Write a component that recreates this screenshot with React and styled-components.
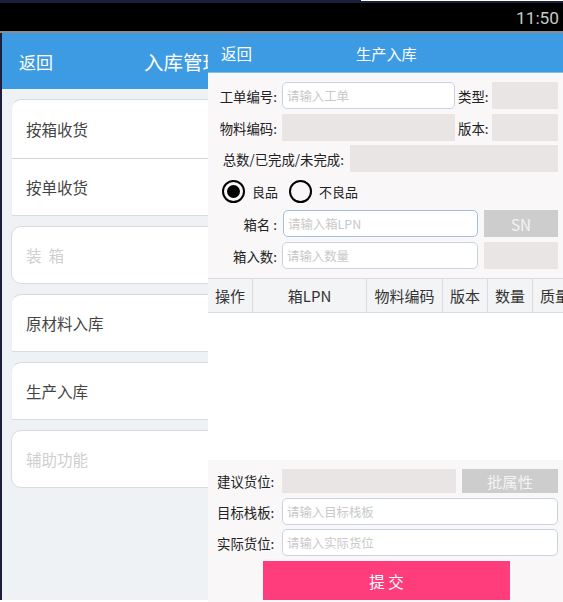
import React from 'react'
import styled, { createGlobalStyle } from 'styled-components'

const GlobalStyle = createGlobalStyle`
  html, body {
    margin: 0;
    padding: 0;
    background: #ffffff;
  }
  * {
    box-sizing: border-box;
  }
  body {
    font-family: "Noto Sans CJK SC", "Liberation Sans", sans-serif;
  }
`

const menu = [
  { items: ['按箱收货', '按单收货'], sharp: true },
  { items: ['装  箱'], disabled: true },
  { items: ['原材料入库'], sharp: true },
  { items: ['生产入库'], sharp: true },
  { items: ['辅助功能'], disabled: true },
]

const columns = [
  { title: '操作', width: 45 },
  { title: '箱LPN', width: 114 },
  { title: '物料编码', width: 76 },
  { title: '版本', width: 45 },
  { title: '数量', width: 45 },
  { title: '质量', width: 45 },
]

function App() {
  return (
    <Page>
      <GlobalStyle />
      <TopStrip>
        <TopStripLight />
      </TopStrip>
      <StatusBar>11:50</StatusBar>
      <Screens>
        <MenuScreen>
          <MenuInner>
            <MenuHeader>
              <MenuBack>返回</MenuBack>
              <MenuTitle>入库管理</MenuTitle>
            </MenuHeader>
            <MenuList>
              {menu.map((card) => (
                <MenuCard key={card.items[0]} $sharp={card.sharp}>
                  {card.items.map((item) => (
                    <MenuItem key={item} $disabled={card.disabled}>
                      {item}
                    </MenuItem>
                  ))}
                </MenuCard>
              ))}
            </MenuList>
          </MenuInner>
        </MenuScreen>

        <FormScreen>
          <FormHeader>
            <FormBack>返回</FormBack>
            <FormTitle>生产入库</FormTitle>
          </FormHeader>

          <TopForm>
            <Row>
              <Label $width={74}>工单编号:</Label>
              <TextInput $width={173} placeholder="请输入工单" />
              <SideLabel>类型:</SideLabel>
              <ReadOnly $width={66} />
            </Row>
            <Row>
              <Label $width={74}>物料编码:</Label>
              <ReadOnly $width={173} />
              <SideLabel>版本:</SideLabel>
              <ReadOnly $width={66} />
            </Row>
            <Row $top={-1}>
              <Label $width={141}>总数/已完成/未完成:</Label>
              <ReadOnly $width={208} $left={1} />
            </Row>
            <RadioRow>
              <RadioOption>
                <RadioMark $checked />
                <RadioText>良品</RadioText>
              </RadioOption>
              <RadioOption>
                <RadioMark />
                <RadioText>不良品</RadioText>
              </RadioOption>
            </RadioRow>
            <Row $top={2}>
              <Label $width={69} $tight>箱名 :</Label>
              <TextInput $width={195} $left={6} $focused placeholder="请输入箱LPN" />
              <GreyButton $width={74} $left={6}>SN</GreyButton>
            </Row>
            <Row>
              <Label $width={74}>箱入数:</Label>
              <TextInput $width={196} placeholder="请输入数量" />
              <ReadOnly $width={74} $left={6} />
            </Row>
          </TopForm>

          <Table>
            {columns.map((col) => (
              <HeadCell key={col.title} $width={col.width}>
                {col.title}
              </HeadCell>
            ))}
          </Table>
          <TableBody />

          <BottomForm>
            <Row $height={24}>
              <BottomLabel>建议货位:</BottomLabel>
              <ReadOnly $width={174} />
              <GreyButton $width={96} $left={6}>批属性</GreyButton>
            </Row>
            <Row $top={5}>
              <BottomLabel>目标栈板:</BottomLabel>
              <TextInput $width={276} placeholder="请输入目标栈板" />
            </Row>
            <Row $top={4}>
              <BottomLabel>实际货位:</BottomLabel>
              <TextInput $width={276} placeholder="请输入实际货位" />
            </Row>
            <SubmitButton>提 交</SubmitButton>
          </BottomForm>
        </FormScreen>
      </Screens>
    </Page>
  )
}

const Page = styled.div`
  width: 563px;
  height: 602px;
  overflow: hidden;
  display: flex;
  flex-direction: column;
  background: #ffffff;
`
const TopStrip = styled.div`
  height: 3px;
  flex: none;
  display: flex;
  justify-content: flex-end;
  background: #1b1f3b;
`
const TopStripLight = styled.div`
  width: 202px;
  height: 1px;
  background: #ffffff;
`
const StatusBar = styled.div`
  height: 30px;
  flex: none;
  background: #000000;
  border-bottom: 2px solid #8c8c8c;
  color: #c9c9c9;
  font-family: Roboto, "Liberation Sans", sans-serif;
  font-size: 17.3px;
  line-height: 30px;
  text-align: right;
  padding-right: 4px;
`
const Screens = styled.div`
  flex: 1;
  min-height: 0;
  display: flex;
`
const MenuScreen = styled.div`
  width: 208px;
  height: 567px;
  border-left: 2px solid #1b1f3b;
  flex: none;
  overflow: hidden;
  background: #eff2f5;
`
const MenuInner = styled.div`
  width: 400px;
`
const MenuHeader = styled.div`
  height: 56px;
  display: flex;
  align-items: center;
  padding-left: 17px;
  background: #3d9be3;
  color: #ffffff;
`
const MenuBack = styled.span`
  width: 125px;
  font-size: 17px;
`
const MenuTitle = styled.span`
  font-size: 19.5px;
  white-space: nowrap;
`
const MenuList = styled.div`
  display: flex;
  flex-direction: column;
  gap: 10px;
  padding: 10px 0 0 9px;
`
const MenuCard = styled.div`
  background: #ffffff;
  border: 1px solid #d8dade;
  border-radius: 10px;
  border-bottom-left-radius: ${(p) => (p.$sharp ? '0' : '10px')};
  border-left-color: ${(p) => (p.$sharp ? '#eceef0' : '#d8dade')};
`
const MenuItem = styled.div`
  height: 56px;
  display: flex;
  align-items: center;
  padding-left: 14px;
  font-size: 15.5px;
  white-space: pre;
  color: ${(p) => (p.$disabled ? '#cfcfcf' : '#444444')};
  &:not(:last-child) {
    height: 58px;
  }
  & + & {
    height: 57px;
    border-top: 1px solid #d2d3d6;
  }
`
const FormScreen = styled.div`
  flex: 1;
  min-width: 0;
  display: flex;
  flex-direction: column;
  background: #f9f7f8;
  overflow: hidden;
`
const FormHeader = styled.div`
  height: 40px;
  flex: none;
  display: flex;
  align-items: center;
  background: #3d9be3;
  border-bottom: 1px solid #7cc0ef;
  color: #ffffff;
  padding-left: 13px;
`
const FormBack = styled.span`
  width: 135px;
  font-size: 15.5px;
`
const FormTitle = styled.span`
  font-size: 15.2px;
`
const TopForm = styled.div`
  height: 205px;
  flex: none;
  padding-top: 9px;
  display: flex;
  flex-direction: column;
  gap: 5px;
`
const Row = styled.div`
  flex: none;
  height: ${(p) => p.$height || 27}px;
  margin-top: ${(p) => p.$top || 0}px;
  display: flex;
  align-items: center;
  white-space: nowrap;
`
const Label = styled.label`
  width: ${(p) => p.$width}px;
  flex: none;
  text-align: right;
  font-size: 13.4px;
  color: #222222;
  padding-right: ${(p) => (p.$tight ? 0 : 5)}px;
`
const SideLabel = styled.span`
  width: 37px;
  flex: none;
  padding-left: 3px;
  font-size: 13.4px;
  color: #222222;
`
const BottomLabel = styled.span`
  width: 74px;
  flex: none;
  padding-left: 9px;
  font-size: 13.4px;
  color: #222222;
`
const TextInput = styled.input`
  width: ${(p) => p.$width}px;
  height: 27px;
  flex: none;
  margin-left: ${(p) => p.$left || 0}px;
  padding: 0 4px;
  background: #ffffff;
  border: 1px solid ${(p) => (p.$focused ? '#9cc3e2' : '#c9d3e6')};
  border-radius: 5px;
  outline: none;
  font-family: inherit;
  font-size: 12.4px;
  &::placeholder {
    color: #c9c9c9;
    opacity: 1;
  }
`
const ReadOnly = styled.div`
  width: ${(p) => p.$width}px;
  height: 100%;
  flex: none;
  margin-left: ${(p) => p.$left || 0}px;
  background: #e8e5e4;
`
const GreyButton = styled.div`
  width: ${(p) => p.$width}px;
  height: 100%;
  flex: none;
  margin-left: ${(p) => p.$left || 0}px;
  display: flex;
  align-items: center;
  justify-content: center;
  background: #cdcdcd;
  color: #f4f4f4;
  font-size: 15.3px;
`
const RadioRow = styled.div`
  flex: none;
  height: 23px;
  margin-top: 3px;
  padding-left: 14px;
  display: flex;
  align-items: center;
  gap: 11px;
`
const RadioOption = styled.div`
  display: flex;
  align-items: center;
  gap: 7px;
`
const RadioMark = styled.span`
  width: 23px;
  height: 23px;
  border: 2.5px solid #000000;
  border-radius: 50%;
  display: flex;
  align-items: center;
  justify-content: center;
  &::after {
    content: '';
    width: 13px;
    height: 13px;
    border-radius: 50%;
    background: ${(p) => (p.$checked ? '#000000' : 'transparent')};
  }
`
const RadioText = styled.span`
  font-size: 13px;
  color: #222222;
`
const Table = styled.div`
  height: 35px;
  flex: none;
  display: flex;
  background: #f3f4f6;
  border-top: 1px solid #dcdcdc;
  border-bottom: 1px solid #dcdcdc;
`
const HeadCell = styled.div`
  width: ${(p) => p.$width}px;
  flex: none;
  display: flex;
  align-items: center;
  justify-content: center;
  padding-bottom: 1px;
  font-size: 15px;
  color: #333333;
  white-space: nowrap;
  border-right: 1px solid #dcdcdc;
`
const TableBody = styled.div`
  height: 147px;
  flex: none;
  background: #ffffff;
`
const BottomForm = styled.div`
  flex: 1;
  padding-top: 9px;
  display: flex;
  flex-direction: column;
`
const SubmitButton = styled.div`
  width: 247px;
  height: 39px;
  flex: none;
  margin: 5px 0 0 55px;
  display: flex;
  align-items: center;
  justify-content: center;
  background: #ff3d7c;
  color: #ffffff;
  font-size: 15.5px;
`

export default App
